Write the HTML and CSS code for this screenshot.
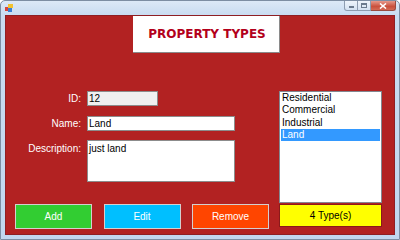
FILE: index.html
```html
<!DOCTYPE html>
<html>
<head>
<meta charset="utf-8">
<link rel="stylesheet" href="styles.css">
</head>
<body>
<div class="window">
  <div class="titlebar">
    <svg class="appicon" width="8" height="8" viewBox="0 0 8 8">
      <rect x="0" y="3" width="4" height="4" fill="#d9463a"/>
      <rect x="3" y="0" width="5" height="4" fill="#f2c230"/>
      <rect x="3" y="4" width="4" height="4" fill="#3a7fd5"/>
    </svg>
    <div class="controls">
      <div class="ctl ctl-min"><span class="dash"></span></div>
      <div class="ctl ctl-max"><span class="box"></span></div>
      <div class="ctl ctl-close">
        <svg width="8" height="6" viewBox="0 0 8 6"><path d="M1 0.5 L7 5.5 M7 0.5 L1 5.5" stroke="#fff" stroke-width="1.6"/></svg>
      </div>
    </div>
  </div>
  <div class="client">
    <div class="titlebox">PROPERTY TYPES</div>
    <div class="body">
      <div class="form">
        <div class="field">
          <label class="lbl">ID:</label>
          <input class="txt txt-id" type="text" value="12" readonly>
        </div>
        <div class="field field-name">
          <label class="lbl">Name:</label>
          <input class="txt txt-name" type="text" value="Land">
        </div>
        <div class="field field-desc">
          <label class="lbl lbl-desc">Description:</label>
          <textarea class="txt txt-desc">just land</textarea>
        </div>
      </div>
      <div class="listbox">
        <div class="item">Residential</div>
        <div class="item">Commercial</div>
        <div class="item">Industrial</div>
        <div class="item selected">Land</div>
      </div>
    </div>
    <div class="footer">
      <div class="buttons">
        <div class="btn btn-add">Add</div>
        <div class="btn btn-edit">Edit</div>
        <div class="btn btn-remove">Remove</div>
      </div>
      <div class="count">4 Type(s)</div>
    </div>
  </div>
</div>
</body>
</html>
```
FILE: styles.css
```css
html, body {
  margin: 0;
  padding: 0;
  width: 400px;
  height: 240px;
  overflow: hidden;
  background: #ffffff;
}

.window {
  box-sizing: border-box;
  width: 400px;
  height: 240px;
  border: 1px solid #7d8ea3;
  border-radius: 5px 5px 0 0;
  padding: 0 4px 4px 4px;
  background: linear-gradient(#dce9f7 0px, #c9dcf1 14px, #c2d7ef 100%);
  display: flex;
  flex-direction: column;
  font-family: "Liberation Sans", Arial, sans-serif;
}

.titlebar {
  height: 14px;
  flex: none;
  display: flex;
  align-items: flex-start;
}

.appicon {
  margin-top: 3px;
  margin-left: 0;
}

.controls {
  margin-left: auto;
  margin-right: -1px;
  display: flex;
}

.ctl {
  box-sizing: border-box;
  height: 10px;
  border: 1px solid #8d9cb0;
  border-top: none;
  display: flex;
  align-items: center;
  justify-content: center;
}

.ctl-min {
  width: 14px;
  border-radius: 0 0 0 3px;
  background: linear-gradient(#eef4fb, #d3e1f1);
}

.ctl-max {
  width: 13px;
  border-left: none;
  background: linear-gradient(#eef4fb, #d3e1f1);
}

.ctl-close {
  width: 25px;
  border-left: none;
  border-color: #9a4a40;
  border-radius: 0 0 3px 0;
  background: linear-gradient(#e69a8c, #c9503c 60%, #d36a55);
}

.dash {
  display: block;
  width: 5px;
  height: 2px;
  margin-top: 3px;
  background: #6b7a8d;
}

.box {
  display: block;
  box-sizing: border-box;
  width: 6px;
  height: 5px;
  border: 1px solid #6b7a8d;
  border-top-width: 2px;
}

.client {
  flex: none;
  box-sizing: border-box;
  height: 220px;
  background: #b22222;
  border: 1px solid #8f1f24;
  display: flex;
  flex-direction: column;
}

.titlebox {
  box-sizing: border-box;
  width: 147px;
  height: 37px;
  margin-left: 127px;
  background: #ffffff;
  border-right: 1px solid #8a8a8a;
  border-bottom: 1px solid #8a8a8a;
  display: flex;
  align-items: center;
  justify-content: center;
  font-family: "DejaVu Sans", Verdana, sans-serif;
  font-weight: bold;
  font-size: 12px;
  color: #b3001b;
  padding-left: 2px;
}

.body {
  margin-top: 38px;
  display: grid;
  grid-template-columns: 273px 103px;
  height: 112px;
}

.form {
  display: flex;
  flex-direction: column;
}

.field {
  display: flex;
  align-items: center;
  gap: 6px;
}

.field-name {
  margin-top: 10px;
}

.field-desc {
  margin-top: 9px;
  align-items: flex-start;
}

.lbl {
  width: 75px;
  text-align: right;
  color: #ffffff;
  font-size: 10px;
  line-height: 12px;
}

.lbl-desc {
  padding-top: 3px;
}

.txt {
  box-sizing: border-box;
  margin: 0;
  border: 1px solid #8c8c8c;
  padding: 0 1px;
  font-family: "Liberation Sans", Arial, sans-serif;
  font-size: 10px;
  color: #000000;
  background: #ffffff;
  outline: none;
}

.txt-id {
  width: 71px;
  height: 15px;
  background: #f0f0f0;
}

.txt-name {
  width: 148px;
  height: 15px;
}

.txt-desc {
  width: 148px;
  height: 42px;
  resize: none;
  padding-top: 2px;
  line-height: 12px;
  overflow: hidden;
}

.listbox {
  box-sizing: border-box;
  width: 103px;
  height: 112px;
  background: #ffffff;
  border: 1px solid #828790;
  font-size: 10px;
  color: #000000;
}

.item {
  height: 12.33px;
  line-height: 12.33px;
  margin: 0 1px 0 1px;
  padding-left: 1px;
  white-space: nowrap;
}

.item.selected {
  background: #3399ff;
  color: #ffffff;
}

.footer {
  margin-top: 1px;
  display: grid;
  grid-template-columns: 273px 103px;
  align-items: start;
}

.buttons {
  display: flex;
  gap: 11.5px;
  padding-left: 9px;
}

.btn {
  box-sizing: border-box;
  width: 77px;
  height: 25px;
  border: 1px solid #d4cfcf;
  color: #ffffff;
  font-size: 10px;
  display: flex;
  align-items: center;
  justify-content: center;
}

.btn-add { background: #32cd32; }
.btn-edit { background: #00bfff; }
.btn-remove { background: #ff4500; }

.count {
  box-sizing: border-box;
  width: 103px;
  height: 23px;
  background: #ffff00;
  border: 1px solid #8b1a1a;
  color: #000000;
  font-size: 10px;
  display: flex;
  align-items: center;
  justify-content: center;
}
```
